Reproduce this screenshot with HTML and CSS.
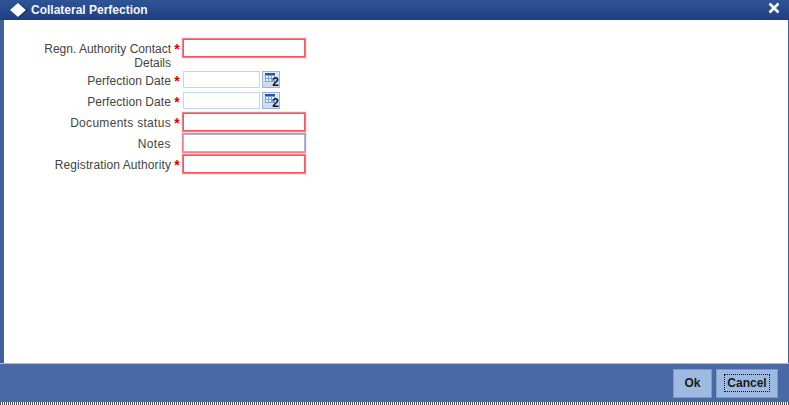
FILE: index.html
```html
<!DOCTYPE html>
<html lang="en">
<head>
  <meta charset="UTF-8" />
  <title>Collateral Perfection</title>
  <link rel="stylesheet" href="styles.css">
</head>
<body>
  <div class="window">
    <header class="titlebar">
      <svg class="title-icon" width="22" height="18" viewBox="0 0 22 18">
        <polygon points="11,2 20,9 11,17 3,9" fill="#14295f"/>
        <polygon points="10,2 18,9 10,16 2,9" fill="#ffffff"/>
      </svg>
      <span class="title-text">Collateral Perfection</span>
      <svg class="close-icon" width="12" height="12" viewBox="0 0 12 12">
        <path d="M1.5 1.5 L10.5 10.5 M10.5 1.5 L1.5 10.5" stroke="#ffffff" stroke-width="2.6"/>
      </svg>
    </header>

    <main class="content">
      <form class="form">
        <div class="row row-tall">
          <label class="label">Regn. Authority Contact Details</label>
          <span class="star">*</span>
          <input class="field invalid" type="text">
        </div>
        <div class="row row-date">
          <label class="label label-date">Perfection Date</label>
          <span class="star">*</span>
          <input class="field date" type="text">
          <button class="cal-btn" type="button">
            <svg width="10" height="9" viewBox="0 0 10 9">
              <rect x="0" y="0" width="10" height="9" fill="#7da2d6"/>
              <rect x="0" y="0" width="10" height="2" fill="#2357ab"/>
              <rect x="1" y="3" width="2" height="2" fill="#f0f4fb"/>
              <rect x="4" y="3" width="2" height="2" fill="#f0f4fb"/>
              <rect x="7" y="3" width="2" height="2" fill="#f0f4fb"/>
              <rect x="1" y="6" width="2" height="2" fill="#f0f4fb"/>
              <rect x="4" y="6" width="2" height="2" fill="#f0f4fb"/>
            </svg>
            <span class="cal-num">2</span>
          </button>
        </div>
        <div class="row row-date">
          <label class="label label-date">Perfection Date</label>
          <span class="star">*</span>
          <input class="field date" type="text">
          <button class="cal-btn" type="button">
            <svg width="10" height="9" viewBox="0 0 10 9">
              <rect x="0" y="0" width="10" height="9" fill="#7da2d6"/>
              <rect x="0" y="0" width="10" height="2" fill="#2357ab"/>
              <rect x="1" y="3" width="2" height="2" fill="#f0f4fb"/>
              <rect x="4" y="3" width="2" height="2" fill="#f0f4fb"/>
              <rect x="7" y="3" width="2" height="2" fill="#f0f4fb"/>
              <rect x="1" y="6" width="2" height="2" fill="#f0f4fb"/>
              <rect x="4" y="6" width="2" height="2" fill="#f0f4fb"/>
            </svg>
            <span class="cal-num">2</span>
          </button>
        </div>
        <div class="row">
          <label class="label label-docs">Documents status</label>
          <span class="star">*</span>
          <input class="field invalid" type="text">
        </div>
        <div class="row">
          <label class="label label-notes">Notes</label>
          <span class="star"></span>
          <input class="field invalid notes" type="text">
        </div>
        <div class="row">
          <label class="label label-reg">Registration Authority</label>
          <span class="star">*</span>
          <input class="field invalid" type="text">
        </div>
      </form>
    </main>

    <footer class="footer">
      <button class="btn" type="button">Ok</button>
      <button class="btn btn-cancel" type="button"><span class="focus">Cancel</span></button>
    </footer>
    <div class="dotted"></div>
  </div>
</body>
</html>
```

FILE: styles.css
```css
html, body {
  margin: 0;
  padding: 0;
  height: 405px;
  overflow: hidden;
  background: #ffffff;
}
body {
  font-family: "Liberation Sans", Arial, sans-serif;
  font-size: 12px;
  color: #444444;
}
.window {
  display: flex;
  flex-direction: column;
  height: 405px;
}
.titlebar {
  display: flex;
  align-items: center;
  height: 20px;
  background: linear-gradient(to bottom, #2f5596, #1f3f82);
  flex: none;
}
.title-icon {
  margin-left: 8px;
  flex: none;
}
.title-text {
  margin-left: 1px;
  font-size: 12px;
  font-weight: bold;
  color: #f4f6fb;
}
.close-icon {
  margin-left: auto;
  margin-right: 9px;
  margin-top: -5px;
}
.content {
  flex: 1;
  background: #ffffff;
  border-left: 4px solid #3f5f9f;
  border-right: 1px solid #3f5f9f;
}
.form {
  padding: 19px 0 0 0;
}
.row {
  display: flex;
  align-items: flex-start;
  height: 18px;
  margin-bottom: 3px;
}
.row-tall {
  height: 32px;
  margin-bottom: 0;
}
.row-date {
  height: 17px;
  margin-bottom: 4px;
}
.label {
  width: 127px;
  margin-left: 40px;
  text-align: right;
  line-height: 14px;
  padding-top: 3px;
}
.label-date {
  letter-spacing: 0.07px;
}
.label-docs {
  letter-spacing: 0.3px;
}
.label-notes {
  letter-spacing: 0.4px;
}
.label-reg {
  letter-spacing: 0.1px;
}
.star {
  width: 12px;
  text-align: center;
  color: #e00000;
  font-size: 14px;
  font-weight: bold;
  line-height: 15px;
  padding-top: 3px;
}
.field {
  box-sizing: border-box;
  display: block;
  margin: 0;
  width: 122px;
  height: 18px;
  padding: 0;
  background: #ffffff;
  outline: none;
}
.invalid {
  border: 1px solid #f2555e;
  box-shadow: 0 0 1px 1px #f57f86;
}
.notes {
  border-color: #a9b7d6;
}
.date {
  width: 77px;
  height: 17px;
  border: 1px solid #c4d4ea;
}
.cal-btn {
  position: relative;
  box-sizing: border-box;
  width: 18px;
  height: 17px;
  margin: 0 0 0 2px;
  padding: 1px 0 0 2px;
  background: linear-gradient(to bottom, #e3ebf7, #cbd9ee);
  border: 1px solid #9db4d6;
  display: flex;
}
.cal-num {
  position: absolute;
  right: 0;
  bottom: 0;
  font-size: 12px;
  font-weight: bold;
  line-height: 10px;
  color: #0b1a3a;
}
.footer {
  flex: none;
  height: 39px;
  box-sizing: border-box;
  display: flex;
  justify-content: flex-end;
  align-items: center;
  gap: 4px;
  padding: 0 11px 0 0;
  background: #4a68a6;
  border-top: 1px solid #a9bbd9;
}
.btn {
  box-sizing: border-box;
  height: 29px;
  width: 39px;
  margin: 0;
  padding: 0;
  font-family: "Liberation Sans", Arial, sans-serif;
  font-size: 12px;
  font-weight: bold;
  color: #1a1a1a;
  background: #9fbae0;
  border: 1px solid #7f9ac6;
}
.btn-cancel {
  width: 62px;
}
.focus {
  display: inline-block;
  border: 1px dotted #111111;
  padding: 1px 2px;
}
.dotted {
  flex: none;
  height: 3px;
  background: repeating-linear-gradient(to right, #555555 0 1px, #ffffff 1px 2px);
}
```
